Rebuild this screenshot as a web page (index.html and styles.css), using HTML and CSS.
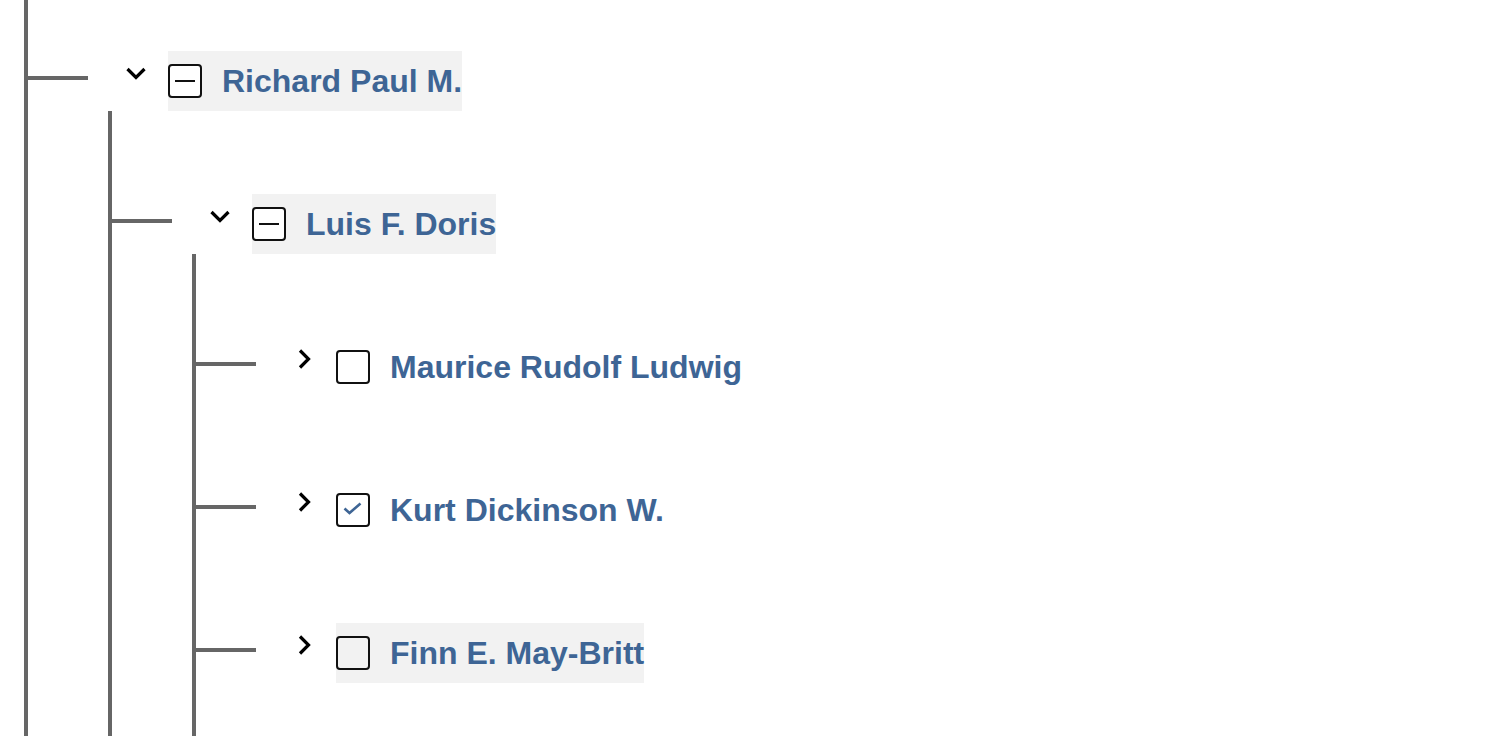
FILE: index.html
```html
<!DOCTYPE html>
<html lang="en">
<head>
<meta charset="utf-8">
<title>Tree</title>
<link rel="stylesheet" href="styles.css">
</head>
<body>
<div class="tree">
  <div class="group root">
    <div class="node first">
      <div class="row">
        <span class="connector"></span>
        <svg class="chevron" viewBox="0 0 24 24" width="24" height="24"><path d="M3.5 8 L12 16.5 L20.5 8"/></svg>
        <div class="item hl">
          <span class="box indet"><span class="dash"></span></span>
          <span class="label">Richard Paul M.</span>
        </div>
      </div>
      <div class="group">
        <div class="node">
          <div class="row">
            <span class="connector"></span>
            <svg class="chevron" viewBox="0 0 24 24" width="24" height="24"><path d="M3.5 8 L12 16.5 L20.5 8"/></svg>
            <div class="item hl">
              <span class="box indet"><span class="dash"></span></span>
              <span class="label">Luis F. Doris</span>
            </div>
          </div>
          <div class="group">
            <div class="node">
              <div class="row">
                <span class="connector"></span>
                <svg class="chevron" viewBox="0 0 24 24" width="24" height="24"><path d="M8 3.5 L16.5 12 L8 20.5"/></svg>
                <div class="item">
                  <span class="box"></span>
                  <span class="label">Maurice Rudolf Ludwig</span>
                </div>
              </div>
            </div>
            <div class="node">
              <div class="row">
                <span class="connector"></span>
                <svg class="chevron" viewBox="0 0 24 24" width="24" height="24"><path d="M8 3.5 L16.5 12 L8 20.5"/></svg>
                <div class="item">
                  <span class="box checked"><svg class="check" viewBox="0 0 30 30" width="30" height="30"><path d="M6.5 13.5 L11.5 18 L22.5 8.5"/></svg></span>
                  <span class="label">Kurt Dickinson W.</span>
                </div>
              </div>
            </div>
            <div class="node">
              <div class="row">
                <span class="connector"></span>
                <svg class="chevron" viewBox="0 0 24 24" width="24" height="24"><path d="M8 3.5 L16.5 12 L8 20.5"/></svg>
                <div class="item hl">
                  <span class="box clear"></span>
                  <span class="label">Finn E. May-Britt</span>
                </div>
              </div>
            </div>
          </div>
        </div>
      </div>
    </div>
  </div>
</div>
</body>
</html>
```

FILE: styles.css
```css
html, body {
  margin: 0;
  padding: 0;
  background: #ffffff;
}

body {
  height: 736px;
  overflow: hidden;
  font-family: "Liberation Sans", Arial, Helvetica, sans-serif;
}

.tree {
  padding-left: 24px;
}

.group {
  border-left: 4px solid #666666;
  padding-bottom: 83px;
}

.group .group {
  margin-left: 80px;
}

.node {
  padding-top: 83px;
}

.root > .node.first {
  padding-top: 51px;
}

.row {
  display: flex;
  align-items: center;
  height: 60px;
}

.connector {
  flex: none;
  width: 60px;
  height: 4px;
  background: #666666;
  margin-bottom: 6px;
}

.chevron {
  flex: none;
  margin-left: 36px;
  margin-right: 20px;
  margin-bottom: 17px;
  fill: none;
  stroke: #000000;
  stroke-width: 3.2;
  stroke-linejoin: miter;
}

.item {
  display: flex;
  align-items: center;
  height: 60px;
}

.item.hl {
  background: #f2f2f2;
}

.box {
  flex: none;
  box-sizing: border-box;
  width: 34px;
  height: 34px;
  border: 2px solid #111111;
  border-radius: 4px;
  background: #ffffff;
  display: flex;
  align-items: center;
  justify-content: center;
}

.box.clear {
  background: transparent;
}

.dash {
  display: block;
  width: 20px;
  height: 2px;
  background: #111111;
}

.check {
  display: block;
  fill: none;
  stroke: #3e6595;
  stroke-width: 2.6;
}

.label {
  margin-left: 20px;
  font-size: 32px;
  font-weight: bold;
  color: #3e6595;
  white-space: nowrap;
}
```
